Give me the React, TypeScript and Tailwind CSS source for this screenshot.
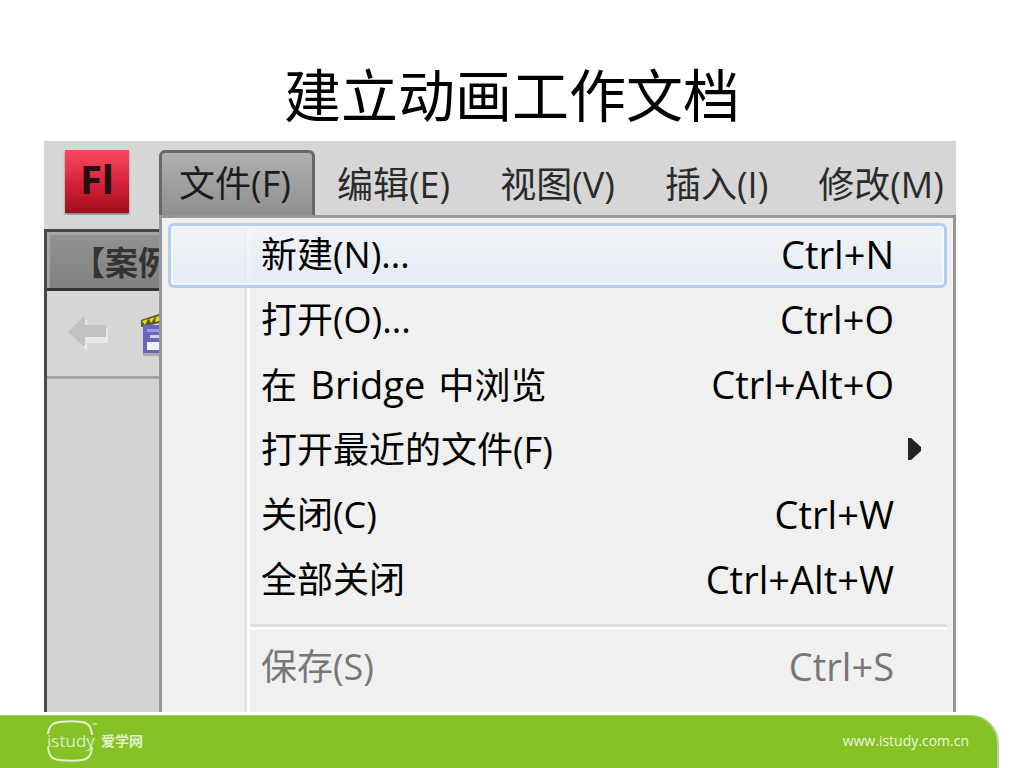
import type { ReactNode } from "react";

type MenuRow = {
  label: ReactNode;
  shortcut?: string;
  submenu?: boolean;
  active?: boolean;
  disabled?: boolean;
};

const menuBar = ["编辑(E)", "视图(V)", "插入(I)", "修改(M)"];

const fileMenu: MenuRow[] = [
  { label: "新建(N)...", shortcut: "Ctrl+N", active: true },
  { label: "打开(O)...", shortcut: "Ctrl+O" },
  {
    label: (
      <>
        在 <span className="mx-1 text-[38px]">Bridge</span> 中浏览
      </>
    ),
    shortcut: "Ctrl+Alt+O",
  },
  { label: "打开最近的文件(F)", submenu: true },
  { label: "关闭(C)", shortcut: "Ctrl+W" },
  { label: "全部关闭", shortcut: "Ctrl+Alt+W" },
];

const Gutter = () => (
  <span className="flex w-[82px] shrink-0 self-stretch justify-end">
    <span className="w-[3px] bg-[#e2e3e3]" />
    <span className="w-[3px] bg-white" />
  </span>
);

const MenuItem = ({ label, shortcut, submenu, active, disabled }: MenuRow) => (
  <button
    type="button"
    role="menuitem"
    disabled={disabled}
    className={`relative flex h-[65px] w-full items-center text-left ${disabled ? "text-[#777777]" : "text-black"}`}
  >
    <Gutter />
    {/* Hover frame, translucent so the gutter line still shows */}
    {active && (
      <span className="absolute inset-0 rounded-md border-[3px] border-[#b2cef0] bg-linear-to-b from-[#f1f3f8]/80 to-[#e3ebf5]/80 shadow-[inset_0_0_0_2px_#f1f7fd]" />
    )}
    <span className="relative flex-1 pb-[2px] pl-[11px] text-[36px] leading-[48px] whitespace-nowrap">{label}</span>
    {shortcut && (
      <span className="relative pr-[53px] pb-[4px] text-[38px] leading-[48px] whitespace-nowrap">{shortcut}</span>
    )}
    {submenu && (
      <svg className="mr-[26px] mb-[4px]" width="13" height="22" viewBox="0 0 13 22" fill="#222" aria-hidden="true">
        <path d="M0 0h3l10 9v4L3 22H0z" />
      </svg>
    )}
  </button>
);

const Separator = () => (
  <div role="separator" className="flex h-[22px]">
    <Gutter />
    <div className="flex-1 pt-[11px]">
      <div className="h-[3px] bg-[#dfdfdf]" />
      <div className="h-[3px] bg-white" />
    </div>
  </div>
);

const DocumentPane = () => (
  <div className="mt-[14px] flex w-[115px] shrink-0 flex-col overflow-hidden border-t-[3px] border-l-[3px] border-[#484848] bg-[#d3d3d3]">
    <div className="flex h-[59px] items-center border-b-[3px] border-[#333] bg-linear-to-b from-[#939393] to-[#818181] pt-[6px] pl-[25px] shadow-[inset_3px_3px_0_#a5a5a5]">
      <span className="text-[33px] leading-[48px] font-bold whitespace-nowrap text-[#333]">【案例</span>
    </div>
    <div className="flex h-[88px] items-center justify-between border-b-[3px] border-[#a5a5a5] bg-[#d6d6d6] pl-[21px]">
      <svg width="42" height="36" viewBox="0 0 42 36" aria-hidden="true">
        <path d="M4 18 19 3v9h21v15H19v8z" fill="#e9e9e9" />
        <path d="M0 16 15 1h2v8h21v12H17v9h-2z" fill="#c2c2c2" />
      </svg>
      <svg width="19" height="46" viewBox="0 0 19 46" aria-hidden="true">
        <path d="M1 9 19 3v9L3 16H1z" fill="#5f5a12" />
        <path d="m2 10 6-2-3 6zM9 8l6-2-4 6zM16 6l3-1v5l-4 1z" fill="#e0d62c" />
        <path d="M3 14h16v28H3z" fill="#6967bd" />
        <path d="M7 18h12v3H7z" fill="#9c9be0" />
        <path d="M10 24h9v3h-9z" fill="#d0d0f5" />
        <path d="M7 31h12v8H7z" fill="#f2f2fb" />
        <path d="M3 42h16v3H3z" fill="#aaa" />
      </svg>
    </div>
  </div>
);

const Footer = () => (
  <footer className="mr-[25px] flex h-[53px] items-center justify-between rounded-tr-[28px] border-t border-r-2 border-t-[#a9cf79] border-r-[#bdd0a5] bg-[#84c225] pr-[28px] pb-[2px] pl-[47px]">
    <div className="flex items-center gap-1">
      <svg width="50" height="42" viewBox="0 0 50 42" aria-label="istudy">
        <g fill="none" stroke="#e5f1d1" strokeWidth="2">
          <path d="M1 14C2 6 5 3 13 2c8-1 16-1 22 0 7 1 9 5 10 13" />
          <path d="M1 27c1 8 3 12 11 13 8 1 16 1 23 0 7-1 9-5 10-13" />
        </g>
        <path d="M46 4h4" stroke="#d6e9b5" strokeWidth="1.5" />
        <text x="0" y="27" fontSize="17" fill="#dcedc2" fontFamily="Open Sans">istudy</text>
      </svg>
      <span className="text-[14px] leading-5 font-bold text-[#e0efc8]">爱学网</span>
    </div>
    <a href="#" className="text-[14px] leading-5 text-[#edf7df]">www.istudy.com.cn</a>
  </footer>
);

export default function App() {
  return (
    <div className="flex min-h-screen flex-col bg-white font-['Open_Sans','Noto_Sans_CJK_SC',sans-serif]">
      <h1 className="flex h-[141px] items-end justify-center pb-[6px] text-[57px] leading-[80px] text-black">
        建立动画工作文档
      </h1>

      <main className="mr-[68px] mb-[3px] ml-[44px] flex flex-1 flex-col bg-[#d6d6d6]">
        <nav className="flex h-[74px] items-end overflow-hidden">
          <div className="flex w-[115px] shrink-0 self-start pt-[9px] pl-[21px]">
            <div className="flex h-[63px] w-[64px] items-center justify-center bg-linear-to-b from-[#f74a61] via-[#d9213b] to-[#9d1018] pb-[6px] text-[40px] leading-[48px] font-bold text-[#251014] shadow-[0_2px_2px_#888]">
              Fl
            </div>
          </div>
          <button
            type="button"
            className="h-[65px] w-[156px] shrink-0 rounded-t-md border-[3px] border-b-0 border-[#686868] bg-linear-to-b from-[#b0b0b0] to-[#8f8f8f] pr-[4px] text-[36px] leading-[48px] text-[#1c1c1c]"
          >
            文件(F)
          </button>
          <div className="flex h-[65px] items-center gap-[50px] pt-[4px] pl-[22px]">
            {menuBar.map((name) => (
              <button key={name} type="button" className="text-[36px] leading-[48px] whitespace-nowrap text-[#2a2a2a]">
                {name}
              </button>
            ))}
          </div>
        </nav>

        <div className="flex flex-1">
          <DocumentPane />
          <div
            role="menu"
            className="flex flex-1 flex-col border-[3px] border-b-0 border-[#979797] bg-[#f0f0f0] px-[6px] pt-[5px]"
          >
            {fileMenu.map((row, i) => (
              <MenuItem key={i} {...row} />
            ))}
            <Separator />
            <MenuItem label="保存(S)" shortcut="Ctrl+S" disabled />
            <div className="flex min-h-[12px] flex-1">
              <Gutter />
            </div>
          </div>
        </div>
      </main>

      <Footer />
    </div>
  );
}
